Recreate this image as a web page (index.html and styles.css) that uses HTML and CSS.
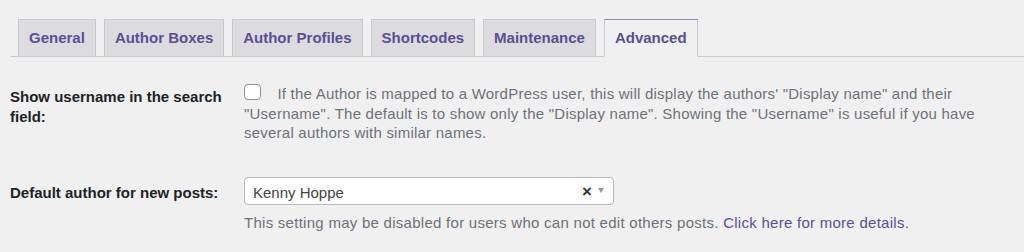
FILE: index.html
```html
<!DOCTYPE html>
<html lang="en">
<head>
<meta charset="utf-8">
<title>Settings - Advanced</title>
<link rel="stylesheet" href="styles.css">
</head>
<body>
<div class="page">
  <nav class="tabs">
    <a class="tab" href="#">General</a>
    <a class="tab" href="#">Author Boxes</a>
    <a class="tab" href="#">Author Profiles</a>
    <a class="tab" href="#">Shortcodes</a>
    <a class="tab" href="#">Maintenance</a>
    <a class="tab tab-active" href="#">Advanced</a>
  </nav>

  <div class="form">
    <div class="row row-first">
      <div class="label">Show username in the search field:</div>
      <div class="field">
        <p class="desc"><input type="checkbox" class="check"> If the Author is mapped to a WordPress user, this will display the authors' "Display name" and their "Username". The default is to show only the "Display name". Showing the "Username" is useful if you have several authors with similar names.</p>
      </div>
    </div>

    <div class="row row-second">
      <div class="label label-select">Default author for new posts:</div>
      <div class="field">
        <div class="select">
          <span class="select-value">Kenny Hoppe</span>
          <span class="select-clear">×</span>
          <span class="select-arrow"></span>
        </div>
        <p class="help">This setting may be disabled for users who can not edit others posts. <a class="link" href="#">Click here for more details.</a></p>
      </div>
    </div>
  </div>
</div>
</body>
</html>
```

FILE: styles.css
```css
html, body {
  margin: 0;
  padding: 0;
  background: #f0f0f1;
}

body {
  font-family: "Liberation Sans", Arial, sans-serif;
  font-size: 15px;
  color: #1d2327;
}

.page {
  padding: 19px 0 0 11px;
}

.tabs {
  display: flex;
  align-items: flex-end;
  border-bottom: 1px solid #c9c9cc;
  padding-left: 7px;
  height: 37px;
}

.tab {
  display: block;
  box-sizing: border-box;
  height: 38px;
  margin: 0 8px -1px 0;
  padding: 0 10px;
  border: 1px solid #c9c9cc;
  background: #dcdcde;
  color: #5a4f97;
  font-weight: bold;
  font-size: 15px;
  line-height: 36px;
  text-decoration: none;
  white-space: nowrap;
}

.tab-active {
  background: #f0f0f1;
  border-top-color: #8f88b3;
  border-bottom-color: #f0f0f1;
}

.form {
  display: flex;
  flex-direction: column;
  padding-right: 20px;
}

.row {
  display: grid;
  grid-template-columns: 233px 1fr;
  align-items: start;
}

.row-first {
  margin-top: 27px;
}

.row-second {
  margin-top: 34px;
}

.label {
  font-weight: bold;
  line-height: 19.5px;
  padding-right: 10px;
  margin-top: 3px;
  margin-left: -1px;
}

.label-select {
  margin-top: 6px;
}

.desc {
  margin: 0;
  color: #6e7277;
  line-height: 19.7px;
  letter-spacing: 0.23px;
}

.check {
  -webkit-appearance: none;
  appearance: none;
  box-sizing: border-box;
  width: 17px;
  height: 16px;
  margin: 0 12px 0 0;
  border: 1px solid #8c8f94;
  border-radius: 4px;
  background: #fff;
  vertical-align: top;
}

.select {
  box-sizing: border-box;
  width: 370px;
  height: 28px;
  display: flex;
  align-items: center;
  border: 1px solid #b8b8bb;
  border-radius: 4px;
  background: #fff;
  padding: 0 9px 0 8px;
}

.select-value {
  flex: 1;
  color: #444;
  padding-top: 3px;
}

.select-clear {
  font-weight: bold;
  color: #333;
  font-size: 17px;
  margin-right: 6px;
  padding-top: 2px;
}

.select-arrow {
  width: 0;
  height: 0;
  border-style: solid;
  border-width: 5px 3px 0 3px;
  border-color: #999 transparent transparent transparent;
  margin-top: -2px;
}

.help {
  margin: 8px 0 0;
  color: #6e7277;
  line-height: 19.5px;
  letter-spacing: 0.27px;
}

.link {
  color: #5a4f97;
  text-decoration: none;
}
```
